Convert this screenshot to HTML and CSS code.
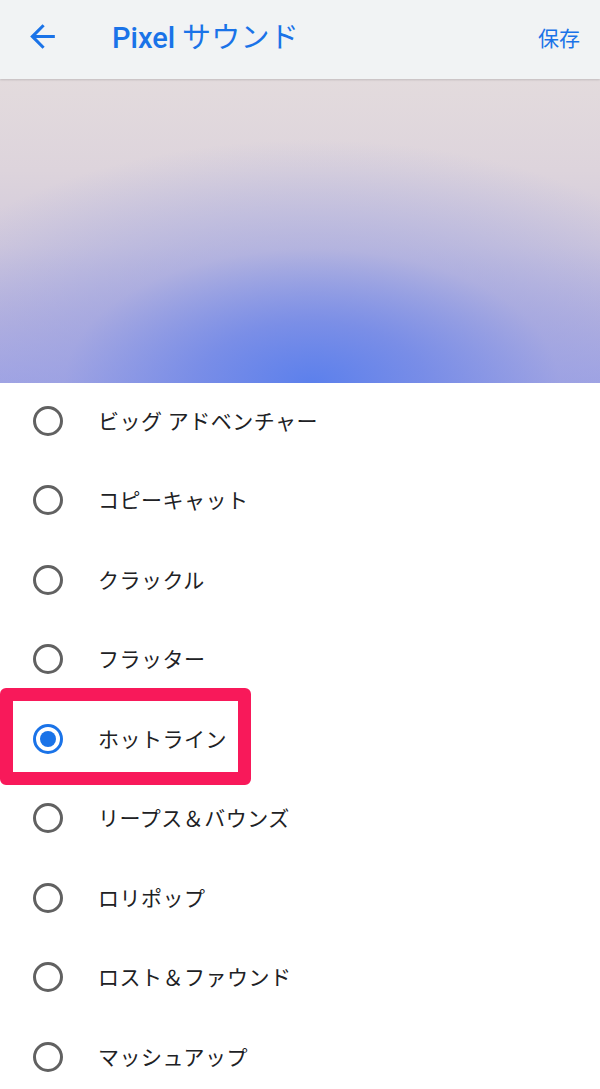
FILE: index.html
```html
<!DOCTYPE html>
<html lang="ja">
<head>
<meta charset="utf-8">
<link rel="stylesheet" href="styles.css">
</head>
<body>
<div class="app">
  <header class="bar">
    <svg class="back" width="37" height="37" viewBox="0 0 24 24"><path d="M20 11H7.83l5.59-5.59L12 4l-8 8 8 8 1.41-1.41L7.83 13H20v-2z" fill="#1a73e8"/></svg>
    <h1 class="title"><span class="latin">Pixel</span> サウンド</h1>
    <span class="save">保存</span>
  </header>
  <div class="banner"></div>
  <ul class="list">
    <li class="row"><span class="radio"></span><span class="label">ビッグ アドベンチャー</span></li>
    <li class="row"><span class="radio"></span><span class="label">コピーキャット</span></li>
    <li class="row"><span class="radio"></span><span class="label">クラックル</span></li>
    <li class="row"><span class="radio"></span><span class="label">フラッター</span></li>
    <li class="row selected"><span class="radio on"></span><span class="label">ホットライン</span><span class="mark"></span></li>
    <li class="row"><span class="radio"></span><span class="label">リープス＆バウンズ</span></li>
    <li class="row"><span class="radio"></span><span class="label">ロリポップ</span></li>
    <li class="row"><span class="radio"></span><span class="label">ロスト＆ファウンド</span></li>
    <li class="row"><span class="radio"></span><span class="label">マッシュアップ</span></li>
  </ul>
</div>
</body>
</html>
```
FILE: styles.css
```css
* { box-sizing: border-box; }
html, body { margin: 0; padding: 0; background: #fff; }
body { font-family: "Noto Sans CJK JP", "Roboto", sans-serif; overflow: hidden; }
.app { width: 600px; height: 1089px; overflow: hidden; }
.bar {
  height: 79px;
  background: #f1f3f4;
  display: flex;
  align-items: center;
  padding: 0 20px 0 24px;
  position: relative;
  z-index: 2;
  box-shadow: 0 1px 2px rgba(0,0,0,0.15);
}
.back { flex: none; margin-top: -6px; }
.title {
  margin: -6px 0 0 51px;
  font-family: "Noto Sans CJK JP", sans-serif;
  font-weight: 400;
  font-size: 29px;
  color: #1a73e8;
  flex: 1;
  line-height: 1;
  letter-spacing: 0.3px;
}
.latin {
  font-family: "Roboto", sans-serif;
  font-weight: 500;
  letter-spacing: 0;
}
.save {
  font-size: 21px;
  color: #1a73e8;
  margin-top: -6px;
}
.banner {
  height: 304px;
  background:
    radial-gradient(ellipse 75% 80% at 52% 100%, rgba(92,128,236,1) 0%, rgba(112,136,232,0.85) 25%, rgba(150,158,226,0.5) 55%, rgba(200,190,220,0) 100%),
    linear-gradient(180deg, #e3dbdd 0%, #ddd4dc 30%, #d2cadc 55%, #b8b4de 80%, #a4a6e4 100%);
}
.list { list-style: none; margin: 0; padding: 0; }
.row {
  height: 79.5px;
  display: flex;
  align-items: center;
  padding-left: 33px;
  position: relative;
}
.row:first-child { margin-top: -2px; }
.radio {
  width: 30px; height: 30px;
  border: 3px solid #616161;
  border-radius: 50%;
  flex: none;
  position: relative;
}
.radio.on { border-color: #1a73e8; }
.radio.on::after {
  content: "";
  position: absolute;
  left: 4px; top: 4px;
  width: 16px; height: 16px;
  border-radius: 50%;
  background: #1a73e8;
}
.label {
  margin-left: 35px;
  font-size: 21px;
  color: #202124;
  letter-spacing: 0.5px;
  margin-top: -2px;
}
.mark {
  position: absolute;
  left: 0; top: 9px;
  width: 251px; height: 97px;
  border: 13px solid #f8195a;
  border-radius: 6px;
  margin-top: -20px;
}
```
